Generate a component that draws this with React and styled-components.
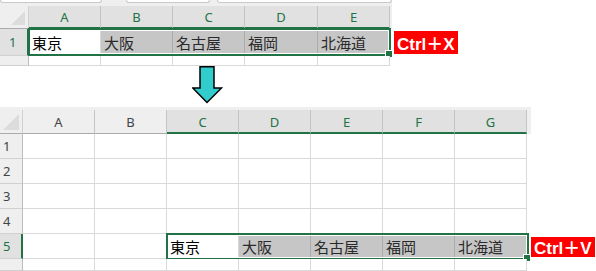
import React from "react";
import styled, { createGlobalStyle } from "styled-components";

const GREEN = "#217346";

const GlobalStyle = createGlobalStyle`
  html, body { margin: 0; padding: 0; background: #ffffff; }
  body { width: 596px; height: 271px; overflow: hidden; font-family: "Noto Sans", "Noto Sans CJK JP", sans-serif; }
`;

const Page = styled.div`
  display: flex;
  flex-direction: column;
  width: 596px;
  height: 271px;
  overflow: hidden;
`;

const Sheet = styled.div`
  display: flex;
  flex-direction: column;
  height: ${(p) => p.$h}px;
  overflow: hidden;
`;

const TabStrip = styled.div`
  display: flex;
  width: ${(p) => p.$w}px;
  height: 3px;
  background: #efefef;
  gap: 0;
`;

const Tab = styled.div`
  box-sizing: border-box;
  width: ${(p) => p.$w}px;
  margin-left: ${(p) => p.$ml || 0}px;
  height: 3px;
  background: #ffffff;
  border: 1px solid #c9c9c9;
  border-top: none;
  border-radius: 0 0 4px 4px;
`;

const GrayStrip = styled.div`
  width: ${(p) => p.$w}px;
  height: ${(p) => p.$h}px;
  background: #efefef;
`;

const HeaderRow = styled.div`
  display: flex;
  width: ${(p) => p.$w}px;
  height: ${(p) => p.$h}px;
  background: #efefef;
  flex-shrink: 0;
`;

const Corner = styled.div`
  position: relative;
  box-sizing: border-box;
  width: ${(p) => p.$w}px;
  height: 100%;
  border-right: 1px solid #d0d0d0;
  border-bottom: 1px solid #ababab;
  &::after {
    content: "";
    position: absolute;
    right: ${(p) => p.$r}px;
    bottom: ${(p) => p.$b}px;
    width: ${(p) => p.$t}px;
    height: ${(p) => p.$t}px;
    background: #dcdcdc;
    clip-path: polygon(100% 0, 100% 100%, 0 100%);
  }
`;

const ColHeader = styled.div`
  box-sizing: border-box;
  width: ${(p) => p.$w}px;
  height: 100%;
  display: flex;
  align-items: center;
  justify-content: center;
  padding-top: 1px;
  font-size: 13px;
  background: ${(p) => (p.$sel ? "#e1e1e1" : "#efefef")};
  color: ${(p) => (p.$sel ? GREEN : "#444444")};
  border-right: 1px solid #c4c4c4;
  border-bottom: ${(p) => (p.$sel ? `2px solid ${GREEN}` : "1px solid #ababab")};
`;

const Row = styled.div`
  position: relative;
  display: flex;
  align-items: stretch;
  height: ${(p) => p.$h}px;
  flex-shrink: 0;
`;

const RowHeader = styled.div`
  box-sizing: border-box;
  width: ${(p) => p.$w}px;
  display: flex;
  align-items: center;
  padding-left: ${(p) => p.$pl}px;
  font-size: 13px;
  background: ${(p) => (p.$sel ? "#e1e1e1" : "#efefef")};
  color: ${(p) => (p.$sel ? GREEN : "#444444")};
  border-right: ${(p) => (p.$sel ? `2px solid ${GREEN}` : "1px solid #bdbdbd")};
  border-bottom: 1px solid #d0d0d0;
`;

const Cell = styled.div`
  box-sizing: border-box;
  width: ${(p) => p.$w}px;
  display: flex;
  align-items: center;
  padding-left: 3px;
  font-family: "Noto Sans CJK JP", sans-serif;
  font-size: 15px;
  color: ${(p) => (p.$fill ? "#2a2a2a" : "#000000")};
  background: ${(p) => (p.$fill ? "#c6c6c6" : "#ffffff")};
  border-right: 1px solid ${(p) => (p.$fill ? "#acacac" : "#d9d9d9")};
  border-bottom: 1px solid #d9d9d9;
  white-space: nowrap;
`;

const Selection = styled.div`
  position: absolute;
  box-sizing: border-box;
  left: ${(p) => p.$l}px;
  top: ${(p) => p.$t}px;
  width: ${(p) => p.$w}px;
  height: ${(p) => p.$h}px;
  border: 2px solid ${GREEN};
  box-shadow: inset 0 0 0 1px #ffffff;
  pointer-events: none;
`;

const FillHandle = styled.div`
  position: absolute;
  right: -4px;
  bottom: -4px;
  width: 6px;
  height: 6px;
  background: ${GREEN};
  border: 1px solid #ffffff;
`;

const Tag = styled.div`
  align-self: center;
  margin-left: ${(p) => p.$ml}px;
  height: ${(p) => p.$h}px;
  padding: 0 3px;
  display: flex;
  align-items: center;
  background: #ff0000;
  color: #ffffff;
  font-family: "Liberation Sans", "Noto Sans CJK JP", sans-serif;
  font-weight: 700;
  font-size: 17px;
  white-space: nowrap;
  z-index: 2;
`;

const ArrowArea = styled.div`
  height: 41px;
  padding-left: 192px;
  flex-shrink: 0;
`;

const DownArrow = () => (
  <svg width="31" height="38" viewBox="0 0 31 38">
    <polygon
      points="8,0.8 22,0.8 22,22 29.5,22 15,36.5 0.8,22 8,22"
      fill="#33cccc"
      stroke="#000000"
      strokeWidth="1.5"
      strokeLinejoin="miter"
    />
  </svg>
);

const names = ["東京", "大阪", "名古屋", "福岡", "北海道"];

const TopSheet = () => {
  const cols = ["A", "B", "C", "D", "E"];
  const widths = [72, 72, 72, 73, 72];
  const corner = 29;
  const total = corner + widths.reduce((a, b) => a + b, 0) + 2;
  return (
    <Sheet $h={66}>
      <TabStrip $w={total}>
        <Tab $w={103} />
        <Tab $w={84} $ml={24} />
        <Tab $w={176} $ml={7} />
      </TabStrip>
      <GrayStrip $w={total} $h={7} />
      <HeaderRow $w={total} $h={23}>
        <Corner $w={corner} $r={3} $b={3} $t={14} />
        {cols.map((c, i) => (
          <ColHeader key={c} $w={widths[i]} $sel>
            {c}
          </ColHeader>
        ))}
      </HeaderRow>
      <Row $h={27}>
        <RowHeader $w={corner} $pl={9} $sel>
          1
        </RowHeader>
        {names.map((n, i) => (
          <Cell key={n} $w={widths[i]} $fill={i > 0}>
            {n}
          </Cell>
        ))}
        <Selection $l={corner - 1} $t={-1} $w={363} $h={28}>
          <FillHandle />
        </Selection>
        <Tag $ml={4} $h={23}>Ctrl＋X</Tag>
      </Row>
      <Row $h={10}>
        <RowHeader $w={corner} $pl={9} />
        {widths.map((w, i) => (
          <Cell key={i} $w={w} />
        ))}
      </Row>
    </Sheet>
  );
};

const BottomSheet = () => {
  const cols = ["A", "B", "C", "D", "E", "F", "G"];
  const w = 72;
  const corner = 23;
  const total = corner + w * 7 + 4;
  const rows = [1, 2, 3, 4];
  return (
    <Sheet $h={164}>
      <GrayStrip $w={total} $h={6} />
      <HeaderRow $w={total} $h={24}>
        <Corner $w={corner} $r={3} $b={3} $t={16} />
        {cols.map((c, i) => (
          <ColHeader key={c} $w={w} $sel={i >= 2}>
            {c}
          </ColHeader>
        ))}
      </HeaderRow>
      {rows.map((r) => (
        <Row key={r} $h={25}>
          <RowHeader $w={corner} $pl={3}>
            {r}
          </RowHeader>
          {cols.map((c) => (
            <Cell key={c} $w={w} />
          ))}
        </Row>
      ))}
      <Row $h={25}>
        <RowHeader $w={corner} $pl={3} $sel>
          5
        </RowHeader>
        <Cell $w={w} />
        <Cell $w={w} />
        {names.map((n, i) => (
          <Cell key={n} $w={w} $fill={i > 0}>
            {n}
          </Cell>
        ))}
        <Selection $l={corner + w * 2 - 1} $t={-1} $w={363} $h={27}>
          <FillHandle />
        </Selection>
        <Tag $ml={4} $h={20}>Ctrl＋V</Tag>
      </Row>
      <Row $h={12}>
        <RowHeader $w={corner} $pl={3} />
        {cols.map((c) => (
          <Cell key={c} $w={w} />
        ))}
      </Row>
    </Sheet>
  );
};

export default function App() {
  return (
    <>
      <GlobalStyle />
      <Page>
        <TopSheet />
        <ArrowArea>
          <DownArrow />
        </ArrowArea>
        <BottomSheet />
      </Page>
    </>
  );
}
